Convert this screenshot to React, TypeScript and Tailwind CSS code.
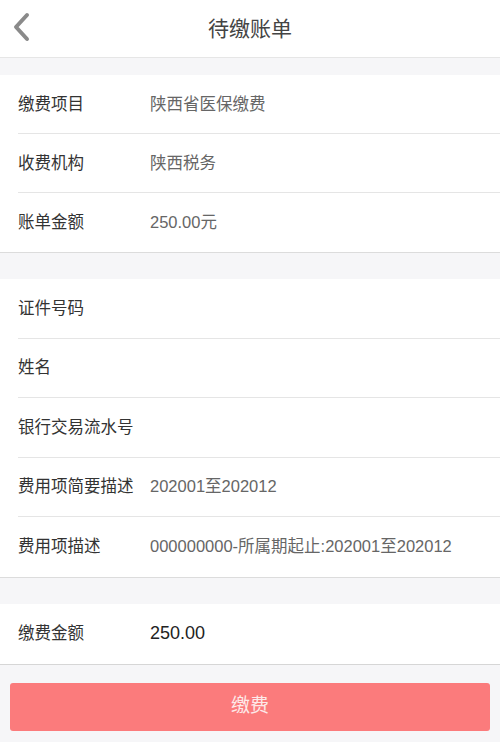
const FONT = '"Liberation Sans", "Noto Sans CJK SC", sans-serif'

type Row = { label: string; value?: string }

const BILL: Row[] = [
  { label: '缴费项目', value: '陕西省医保缴费' },
  { label: '收费机构', value: '陕西税务' },
  { label: '账单金额', value: '250.00元' },
]

const DETAIL: Row[] = [
  { label: '证件号码' },
  { label: '姓名' },
  { label: '银行交易流水号' },
  { label: '费用项简要描述', value: '202001至202012' },
  { label: '费用项描述', value: '000000000-所属期起止:202001至202012' },
]

function Section({ rows, rowH }: { rows: Row[]; rowH: string }) {
  return (
    <div className="border-b border-[#dcdcdc] bg-white pl-[18px]">
      {rows.map((r, i) => (
        <div
          key={r.label}
          className={
            'flex items-center ' +
            rowH +
            (i < rows.length - 1 ? ' border-b border-[#e5e5e5]' : '')
          }
        >
          <span className="w-[132px] shrink-0 whitespace-nowrap text-[16.5px] text-[#333]">{r.label}</span>
          {r.value && <span className="whitespace-nowrap text-[16.5px] text-[#666]">{r.value}</span>}
        </div>
      ))}
    </div>
  )
}

export default function App() {
  return (
    <div className="min-h-[742px] w-[500px] bg-[#f6f6f8]" style={{ fontFamily: FONT }}>
      <header className="relative flex h-[58px] items-center justify-center border-b border-[#e6e6e6] bg-white">
        <svg
          className="absolute left-[11px] top-[12px]"
          width="20"
          height="30"
          viewBox="0 0 20 30"
          fill="none"
        >
          <path d="M16 3 L5 15 L16 27" stroke="#8a8a8a" strokeWidth="4" strokeLinecap="round" strokeLinejoin="round" />
        </svg>
        <h1 className="text-[21px] text-[#444]">待缴账单</h1>
      </header>

      <div className="h-[17px]" />
      <Section rows={BILL} rowH="h-[59px]" />

      <div className="h-[26px]" />
      <Section rows={DETAIL} rowH="h-[59.5px]" />

      <div className="h-[26px]" />
      <div className="border-b border-[#d6d6d6] bg-white pl-[18px]">
        <div className="flex h-[60px] items-center">
          <span className="w-[132px] shrink-0 text-[16.5px] text-[#333]">缴费金额</span>
          <span className="text-[18px] text-[#222]">250.00</span>
        </div>
      </div>

      <div className="px-[10px] pt-[18px]">
        <button className="flex h-[48px] w-full items-center justify-center rounded-[3px] bg-[#fb7b7c] text-[19px] text-[#fde9e9]">
          缴费
        </button>
      </div>
    </div>
  )
}
